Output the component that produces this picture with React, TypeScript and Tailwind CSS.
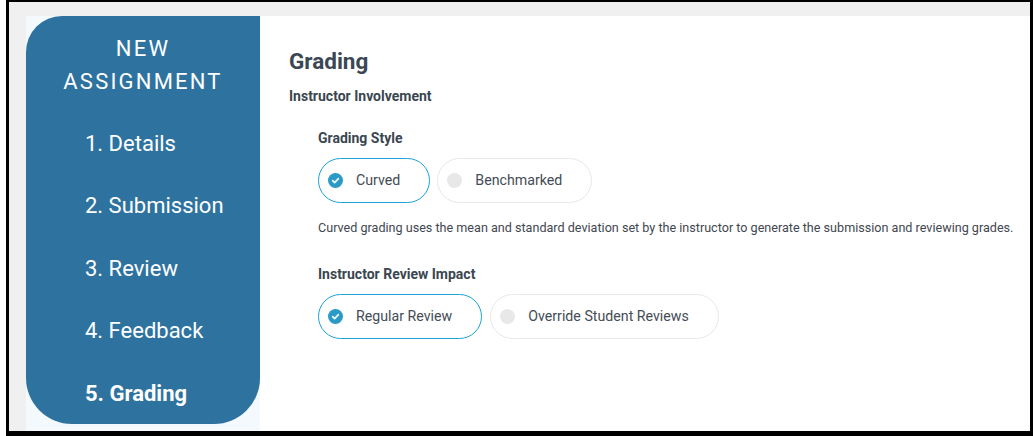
import React from 'react';

const steps = ['1. Details', '2. Submission', '3. Review', '4. Feedback', '5. Grading'];

function Check() {
  return (
    <svg width="15" height="15" viewBox="0 0 15 15" className="shrink-0">
      <circle cx="7.5" cy="7.5" r="7.5" fill="#2a9bc7" />
      <path d="M4.6 7.7 L6.6 9.6 L10.4 5.6" fill="none" stroke="#fff" strokeWidth="1.6" strokeLinecap="round" strokeLinejoin="round" />
    </svg>
  );
}

function Option({ label, selected }: { label: string; selected?: boolean }) {
  return (
    <div
      className={`flex items-center h-[45px] rounded-full pl-[9px] pr-[29px] gap-[13px] bg-white ${
        selected ? 'border border-[#1ba3d6]' : 'border border-[#e8e8e8]'
      }`}
    >
      {selected ? <Check /> : <span className="w-[15px] h-[15px] rounded-full bg-[#e8e8e8] shrink-0" />}
      <span className="text-[14.2px] text-[#444c55]">{label}</span>
    </div>
  );
}

export default function App() {
  return (
    <div className="w-[1033px] h-[436px] bg-white pl-[6px]" style={{ fontFamily: 'Roboto, "Liberation Sans", sans-serif' }}>
      <div className="h-full flex flex-col border-t-2 border-l-[3px] border-r-[3px] border-b-[5px] border-black">
        <div className="h-[14px] bg-[#f0f0f0] shrink-0" />
        <div className="flex flex-1 min-h-0">
          <div className="w-[17px] bg-[#f0f0f0] shrink-0" />
          <div className="w-[234px] shrink-0 bg-[#f3f9fd] pb-[7px]">
            <div className="h-full bg-[#2e73a0] rounded-tl-[36px] rounded-bl-[46px] rounded-br-[46px] text-white">
              <div className="pt-[16px] text-center text-[22px] leading-[33px] tracking-[0.1em]">
                <div>NEW</div>
                <div>ASSIGNMENT</div>
              </div>
              <div className="pl-[59px] pt-[14px] flex flex-col">
                {steps.map((s, i) => (
                  <div
                    key={s}
                    className={`h-[62.5px] flex items-center text-[22px] ${i === 4 ? 'font-bold' : ''}`}
                  >
                    {s}
                  </div>
                ))}
              </div>
            </div>
          </div>
          <div className="flex-1 bg-white pl-[29px] pt-[30px] text-[#3a4650]">
            <h1 className="text-[22.5px] font-bold leading-[30px] text-[#3b4754]">Grading</h1>
            <div className="mt-[12px] text-[14px] font-bold leading-[17px]">Instructor Involvement</div>
            <div className="pl-[29px]">
              <div className="mt-[25px] text-[14px] font-bold leading-[17px]">Grading Style</div>
              <div className="mt-[11px] flex gap-[7px]">
                <Option label="Curved" selected />
                <Option label="Benchmarked" />
              </div>
              <p className="mt-[17px] text-[12.6px] leading-[16px] text-[#3f4750]">
                Curved grading uses the mean and standard deviation set by the instructor to generate the submission and reviewing grades.
              </p>
              <div className="mt-[30px] text-[14px] font-bold leading-[17px]">Instructor Review Impact</div>
              <div className="mt-[11px] flex gap-[8px]">
                <Option label="Regular Review" selected />
                <Option label="Override Student Reviews" />
              </div>
            </div>
          </div>
        </div>
      </div>
    </div>
  );
}
